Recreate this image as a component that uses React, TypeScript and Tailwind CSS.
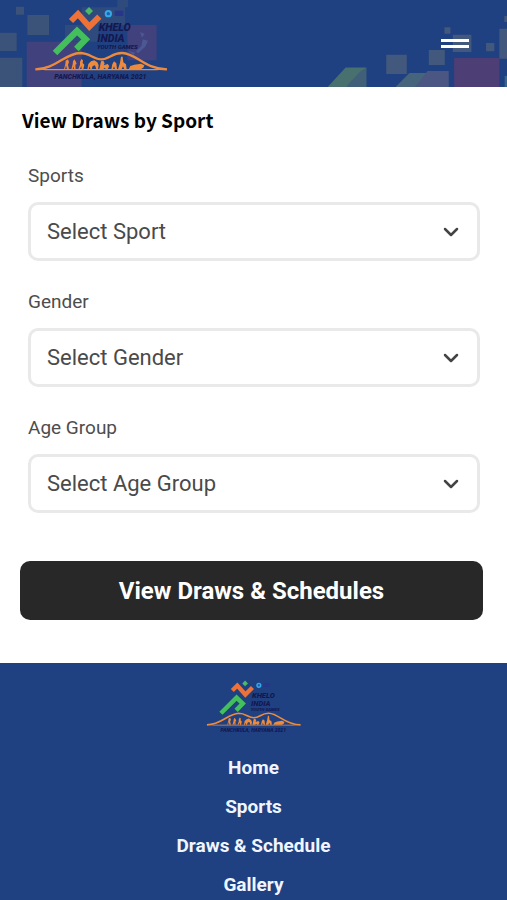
import { useId } from 'react';
import { ChevronDown } from 'lucide-react';

const fields = [
  { label: 'Sports',    placeholder: 'Select Sport' },
  { label: 'Gender',    placeholder: 'Select Gender' },
  { label: 'Age Group', placeholder: 'Select Age Group' },
];

const footerLinks = [
  { label: 'Home',             href: '#home' },
  { label: 'Sports',           href: '#sports' },
  { label: 'Draws & Schedule', href: '#draws' },
  { label: 'Gallery',          href: '#gallery' },
];

function Logo({ className }: { className?: string }) {
  return (
    <svg viewBox="100 15 405 231" className={className} role="img" aria-label="Khelo India Youth Games">
      {/* Runner */}
      <path d="M265 21l12 12-12 12-12-12z" fill="#4fb865" />
      <path d="M211 63l21-21 34 38 30-30" fill="none" stroke="#ee7137" strokeWidth="18" />
      <path d="M163 159l66-66 26 25-28 29" fill="none" stroke="#43bf5b" strokeWidth="19" />
      <circle cx="323" cy="41" r="8" fill="#1f5fb0" stroke="#35a9e6" strokeWidth="6" />
      <path d="M342 32h26v16h-26z" fill="#27368a" />

      {/* Wordmark */}
      <g fill="#15184f" className="font-[Roboto,sans-serif] font-black italic">
        <text x="294" y="94" fontSize="32">KHELO</text>
        <text x="290" y="127" fontSize="32">INDIA</text>
        <text x="289" y="148" fontSize="18">YOUTH GAMES</text>
        <text x="161" y="237" fontSize="21">PANCHKULA, HARYANA 2021</text>
      </g>

      {/* Hills */}
      <path
        d="M104 208C165 207 192 161 238 159c30 0 40 19 64 19s32-20 63-19c44 2 65 48 134 49"
        fill="none" stroke="#ee8a3c" strokeWidth="7"
      />
      <path d="M104 207h395l-30 4H134z" fill="#ee8a3c" />

      {/* People on the ground line */}
      <g fill="#ee8a3c">
        <path d="M195 182l7-4 3 8-3 8 3 14h-6l-3-12-3 12h-3l4-16z" />
        <path d="M217 184l4-6 4 6 3 8-4 2 1 14h-5l-1-9-3 9h-4l4-15z" />
        <path d="M238 186l4-9 5 4-1 8 5 5-3 14h-5l-1-10-5 10h-4l5-14z" />
        <path d="M260 208l3-16 8-8 10-3 9 6 4 9-2 12h-5l-4-12-7 2-3 10h-4l-2-9-3 9z" />
        <path d="M296 208l5-24 7-2 4 8-3 6 12-4 5 6-5 10h-6l-2-5-6 5z" />
        <path d="M332 208l3-15 5-9 7 6 2 18h-6l-3-9-3 9z" />
        <path d="M352 208l6-20 3-18h5l2 17 8 6 2 15h-7l-4-9-4 9z" />
        <path d="M384 208l5-10 12-4 20-3 10 5-3 7-8 5z" />
      </g>
    </svg>
  );
}

function HeaderArt() {
  return (
    <div className="absolute inset-0 flex justify-between" aria-hidden="true">
      <svg viewBox="0 0 480 261" className="h-full w-40 shrink-0">
        <g fill="#3b5279">
          <path d="M48 20h24v24H48zM82 45h65v60H82zM0 98h50v55H0zM0 173h67v88H0z" />
          <path d="M352 0h32v22h-32zM245 22h130v53H245zM195 75h100v50H195z" fillOpacity=".6" />
        </g>
        <path d="M80 125h165v136H80zM382 75h88v106h-88z" fill="#48417c" fillOpacity=".8" />
        <path d="M420 96l14 5-8 12zM428 118l16 4-8 18-22 20-6-6 16-16zM384 152l22 6-6 8z" fill="#4a5893" />
      </svg>
      <svg viewBox="230 0 541 261" className="h-full w-45 shrink-0">
        <g fill="#42587c">
          <path d="M408 164h62v58h-62zM536 150h48v45h-48zM608 104h56v52h-56z" />
          <path d="M583 82h18v19h-18zM708 129h25v25h-25zM748 86h23v90h-23zM763 48h8v18h-8z" />
        </g>
        <path d="M232 261l54-58h62v58z" fill="#47706f" />
        <path d="M296 251l32-34 20-14v58h-60z" fill="#415f78" />
        <path d="M436 261l42-42h58l-40 42z" fill="#46647b" />
        <path d="M496 261l36-48h64v48z" fill="#4b5682" />
        <path d="M612 174h136v87H612z" fill="#4d3f76" />
        <path d="M764 228h7v33h-7z" fill="#37688c" />
      </svg>
    </div>
  );
}

function SelectField({ label, placeholder }: { label: string; placeholder: string }) {
  const id = useId();

  return (
    <div className="flex flex-col gap-3.5">
      <label htmlFor={id} className="text-[19px] leading-6 text-[#4d4d4d]">{label}</label>
      <div className="relative">
        <select
          id={id}
          className="block h-[59px] w-full appearance-none rounded-[10px] border-3 border-[#e9e9e9] bg-white pl-4 pr-12 text-[22px] text-[#4a4a4a]"
        >
          <option>{placeholder}</option>
        </select>
        <ChevronDown
          className="pointer-events-none absolute right-[17px] top-1/2 size-6 -translate-y-1/2 text-[#444]"
          strokeWidth={2.5}
        />
      </div>
    </div>
  );
}

export default function App() {
  return (
    <div className="flex min-h-screen flex-col bg-white font-[Roboto,sans-serif]">
      <header className="relative bg-[#1f4182]">
        <HeaderArt />
        <div className="relative flex h-[87px] items-center justify-between pl-[34px] pr-[38px]">
          <a href="#home"><Logo className="h-[77px] w-[135px]" /></a>
          <button type="button" aria-label="Open menu" className="flex flex-col gap-[3px]">
            <span className="h-[3px] w-7 bg-white" />
            <span className="h-[3px] w-7 bg-white" />
          </button>
        </div>
      </header>

      <main className="pb-[43px] pl-5 pr-6 pt-[19px]">
        <h1 className="pl-0.5 font-['Noto_Sans_CJK_SC',sans-serif] text-[19px] font-bold leading-7 text-black">
          View Draws by Sport
        </h1>

        <form>
          <div className="flex flex-col gap-[29px] pl-2 pr-[3px] pt-[30px]">
            {fields.map((field) => (
              <SelectField key={field.label} {...field} />
            ))}
          </div>
          <button
            type="button"
            className="mt-12 h-[59px] w-full rounded-[10px] bg-[#282828] text-2xl font-bold text-white"
          >
            View Draws &amp; Schedules
          </button>
        </form>
      </main>

      {/* Footer */}
      <footer className="flex flex-1 flex-col items-center bg-[#1f4182] pt-4">
        <Logo className="h-[55px] w-24" />
        <nav className="flex flex-col items-center gap-[15px] pt-[22px]">
          {footerLinks.map((link) => (
            <a key={link.href} href={link.href} className="text-[19px] font-bold leading-6 text-[#f0f5ff]">
              {link.label}
            </a>
          ))}
        </nav>
      </footer>
    </div>
  );
}
